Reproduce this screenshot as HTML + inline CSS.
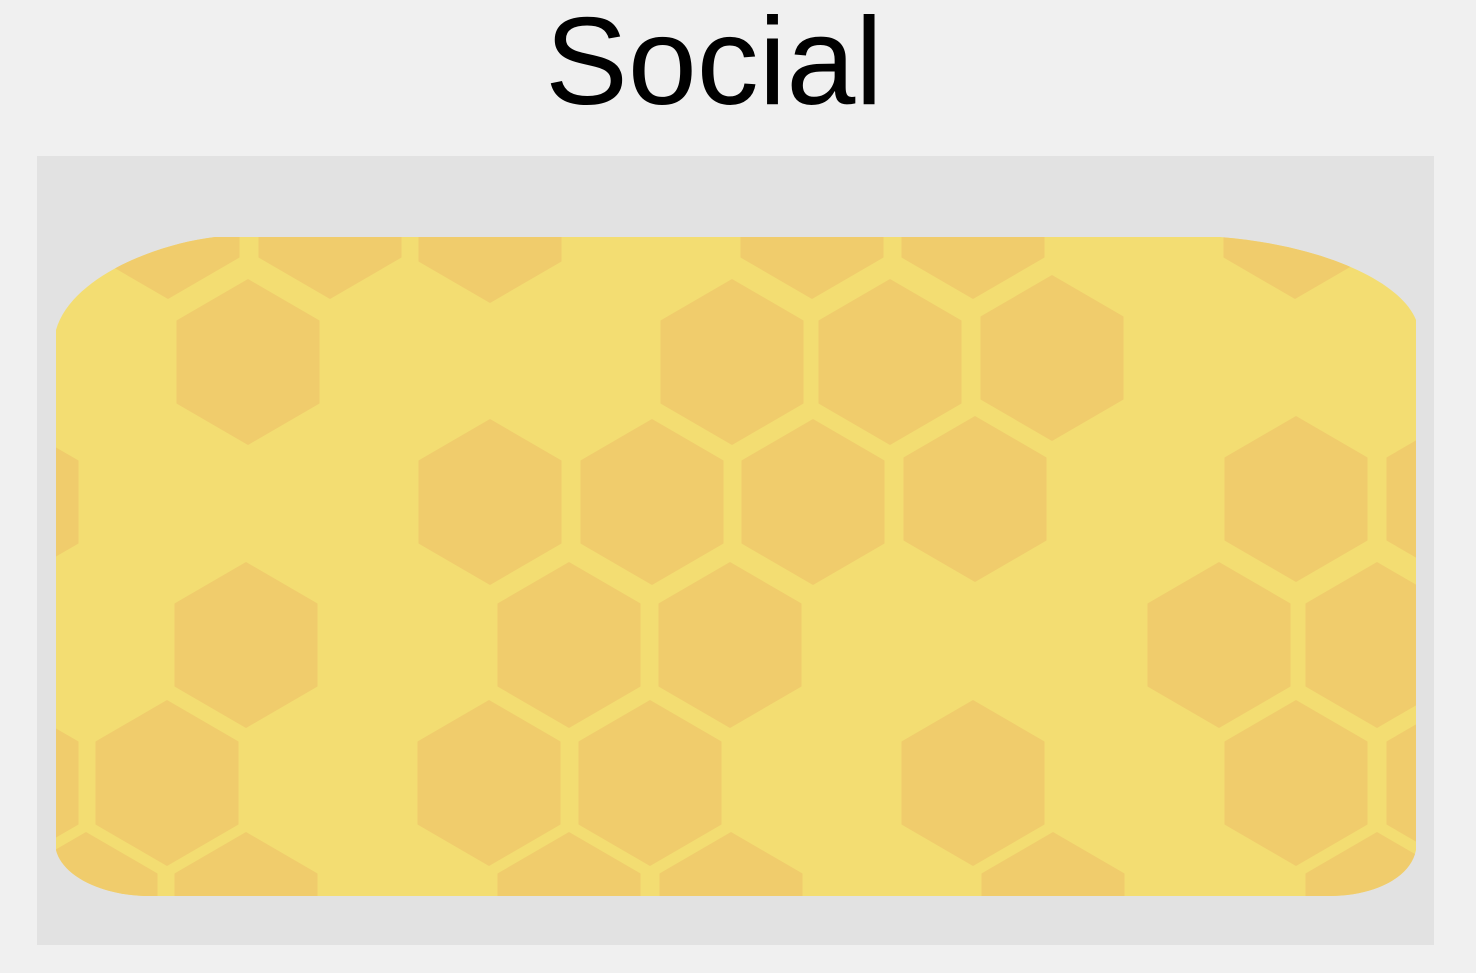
<!DOCTYPE html>
<html><head><meta charset="utf-8"><style>
html,body{margin:0;padding:0;background:#f0f0f0;width:1476px;height:973px;overflow:hidden}
.t{position:absolute;left:0;width:1428px;text-align:center;top:-8px;font:124px/140px "Liberation Sans",sans-serif;color:#000;padding-left:0}
</style></head><body>
<div class="t" style="width:1428px">Social</div>
<svg style="position:absolute;left:0;top:0" width="1476" height="973">
<defs>
<clipPath id="c"><path d="M215 237 H1220 C1320 245 1400 280 1416 320 V850 C1410 880 1370 896 1330 896 H150 C100 896 62 875 56 850 V330 C70 280 150 245 215 237 Z"/></clipPath>
<polygon id="h" points="0,-83 71.5,-41.5 71.5,41.5 0,83 -71.5,41.5 -71.5,-41.5"/>
</defs>
<rect x="37" y="156" width="1397" height="789" fill="#e2e2e2"/>
<g clip-path="url(#c)">
<rect x="0" y="200" width="1476" height="720" fill="#f3dd72"/>
<g fill="#f0cc6c">
<use href="#h" x="168" y="216"/><use href="#h" x="330" y="216"/><use href="#h" x="490" y="220"/><use href="#h" x="812" y="216"/><use href="#h" x="973" y="216"/><use href="#h" x="1295" y="216"/>
<use href="#h" x="248" y="362"/><use href="#h" x="732" y="362"/><use href="#h" x="890" y="362"/><use href="#h" x="1052" y="358"/>
<use href="#h" x="7" y="502"/><use href="#h" x="490" y="502"/><use href="#h" x="652" y="502"/><use href="#h" x="813" y="502"/><use href="#h" x="975" y="499"/><use href="#h" x="1296" y="499"/><use href="#h" x="1458" y="499"/>
<use href="#h" x="246" y="645"/><use href="#h" x="569" y="645"/><use href="#h" x="730" y="645"/><use href="#h" x="1219" y="645"/><use href="#h" x="1377" y="645"/>
<use href="#h" x="7" y="783"/><use href="#h" x="167" y="783"/><use href="#h" x="489" y="783"/><use href="#h" x="650" y="783"/><use href="#h" x="973" y="783"/><use href="#h" x="1296" y="783"/><use href="#h" x="1458" y="783"/>
<use href="#h" x="86" y="915"/><use href="#h" x="246" y="915"/><use href="#h" x="569" y="915"/><use href="#h" x="731" y="915"/><use href="#h" x="1053" y="915"/><use href="#h" x="1377" y="915"/>
</g>
</g>
</svg>
</body></html>
